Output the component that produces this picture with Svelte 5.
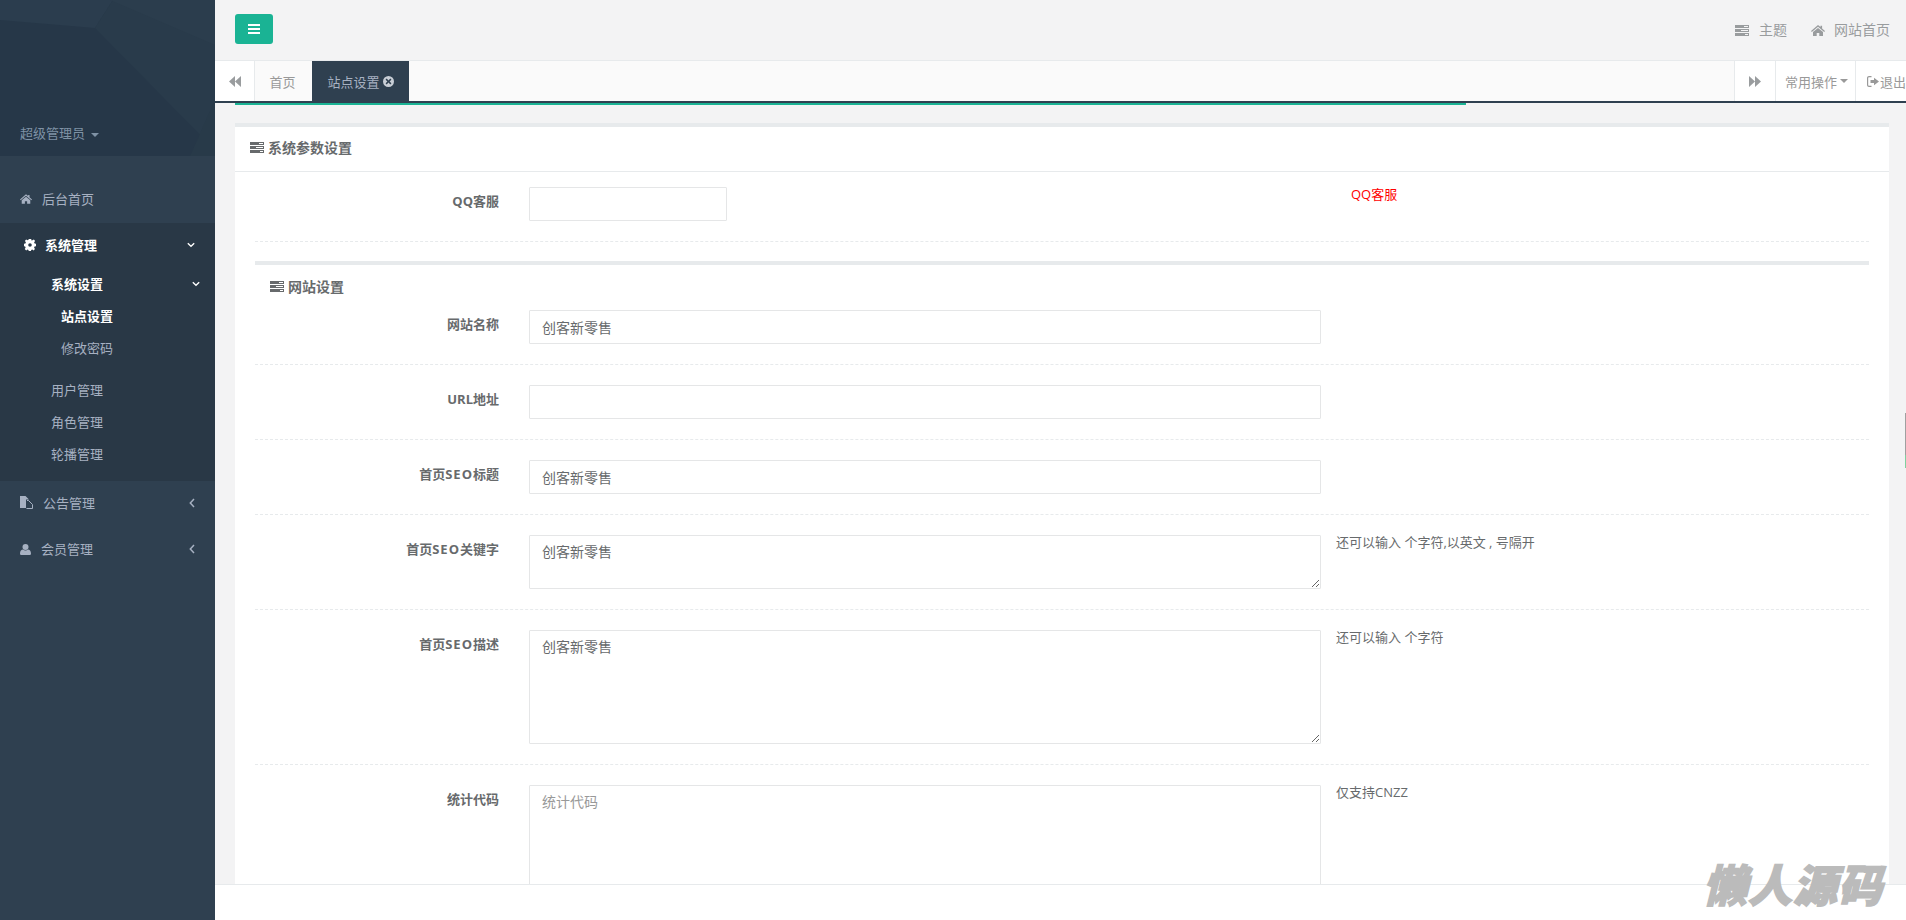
<script>
  const rows = [
    { label: '网站名称', value: '创客新零售', h: 34 },
    { label: 'URL地址', value: '', h: 34 },
    { label: '首页SEO标题', value: '创客新零售', h: 34 },
    { label: '首页SEO关键字', value: '创客新零售', h: 54, area: true, hint: '还可以输入 个字符,以英文 , 号隔开' },
    { label: '首页SEO描述', value: '创客新零售', h: 114, area: true, hint: '还可以输入 个字符' },
    { label: '统计代码', value: '', placeholder: '统计代码', h: 114, area: true, hint: '仅支持CNZZ', last: true }
  ];
</script>

{#snippet tasks(cls)}
  <svg class={cls} viewBox="0 0 14 11" aria-hidden="true"><path d="M0 0h14v3H0zM0 4h14v3H0zM0 8h14v3H0zM9 1h4v1H9zM6 5h7v1H6zM10 9h3v1h-3z" fill-rule="evenodd"/></svg>
{/snippet}
{#snippet home(cls)}
  <svg class={cls} viewBox="0 0 14 11" aria-hidden="true"><path d="M7 0 L9.500 2.100V.8h1.600v2.700L14 6l-.8.9L7 1.700.8 6.900 0 6zM2 7l5-4.100L12 7v4H8.300V8H5.700v3H2z"/></svg>
{/snippet}
{#snippet angleDown(cls)}
  <svg class={cls} viewBox="0 0 10 7" aria-hidden="true"><path d="M1 1.200 5 5l4-3.800" fill="none" stroke="currentColor" stroke-width="1.700"/></svg>
{/snippet}
{#snippet angleLeft(cls)}
  <svg class={cls} viewBox="0 0 6 10" aria-hidden="true"><path d="M5 1 1.300 5 5 9" fill="none" stroke="currentColor" stroke-width="1.500"/></svg>
{/snippet}

<div class="page">
  <aside class="side">
    <div class="profile">
      <svg class="poly" viewBox="0 0 215 156" preserveAspectRatio="none" aria-hidden="true">
        <path d="M0 0H215V156H0z" fill="#263748"/>
        <path d="M0 20 95 28 113 0H0z" fill="#2b3d4e"/>
        <path d="M95 28 215 150V0H113z" fill="#293b4b"/>
        <path d="M110 0 215 45V0z" fill="#2b3d4d"/>
        <path d="M190 156 215 100V156z" fill="#283a49"/>
      </svg>
      <div class="who">超级管理员 <i class="caret"></i></div>
    </div>
    <nav class="menu">
      <a class="top first" href="#a">{@render home('ic-home')}<span>后台首页</span></a>
      <div class="open">
        <a class="top cur" href="#a">
          <svg class="ic-cog" viewBox="0 0 12 12" aria-hidden="true"><path fill-rule="evenodd" d="M4.800 0h2.400l.3 1.600 1-.4 1.400-.6 1.200 1.500-1 1.200.5 1.100 1.400.4v2.400l-1.500.4-.4 1.100.9 1.300-1.500 1.400-1.200-.9-1.100.5-.3 1.500H4.800l-.3-1.500-1.100-.5-1.200.9-1.500-1.400.9-1.300-.4-1.100L0 7.200V4.800l1.400-.4.5-1.100-1-1.200L2.100.6l1.400.6 1-.4zM6 4.200a1.800 1.800 0 1 0 0 3.600 1.800 1.800 0 0 0 0-3.600z"/></svg>
          <span>系统管理</span>{@render angleDown('ad')}
        </a>
        <a class="sub cur s1" href="#a"><span>系统设置</span>{@render angleDown('ad2')}</a>
        <a class="third cur" href="#a">站点设置</a>
        <a class="third" href="#a">修改密码</a>
        <a class="sub gap" href="#a">用户管理</a>
        <a class="sub" href="#a">角色管理</a>
        <a class="sub" href="#a">轮播管理</a>
      </div>
      <a class="top t3" href="#a">
        <svg class="ic-files" viewBox="0 0 13 13" aria-hidden="true"><path d="M0 0h5.500L9 3.500H6V12H0z"/><path d="M7 4.500h1.500l4 4v4H6.500" fill="none" stroke="currentColor"/></svg>
        <span>公告管理</span>{@render angleLeft('al')}
      </a>
      <a class="top t4" href="#a">
        <svg class="ic-user" viewBox="0 0 11 11" aria-hidden="true"><circle cx="5.500" cy="3" r="3"/><path d="M0 9.500C0 7 1.500 5.500 3 5.500c.8.700 1.600 1 2.500 1s1.700-.3 2.500-1c1.500 0 3 1.500 3 4 0 1-.7 1.500-1.500 1.500h-8C.7 11 0 10.500 0 9.500z"/></svg>
        <span>会员管理</span>{@render angleLeft('al')}
      </a>
    </nav>
  </aside>

  <div class="main">
    <header class="top-bar">
      <button class="burger" aria-label="menu"><i></i><i></i><i></i></button>
      <div class="links">
        <a href="#a">{@render tasks('ic-task')}<span>主题</span></a>
        <a href="#a">{@render home('ic-home2')}<span>网站首页</span></a>
      </div>
    </header>

    <div class="tabs">
      <button class="tb first-b" aria-label="back"><svg viewBox="0 0 11 10" aria-hidden="true"><path d="M5.500 0v10L0 5zM11 0v10L5.500 5z"/></svg></button>
      <a class="tab" href="#a">首页</a>
      <a class="tab on" href="#a">站点设置 <svg class="x" viewBox="0 0 12 12" aria-hidden="true"><path fill-rule="evenodd" d="M6 0a6 6 0 1 1 0 12A6 6 0 0 1 6 0zM4 2.800 2.800 4l2 2-2 2L4 9.200l2-2 2 2L9.200 8l-2-2 2-2L8 2.800l-2 2z"/></svg></a>
      <div class="fill"></div>
      <button class="tb" aria-label="forward"><svg viewBox="0 0 11 10" aria-hidden="true"><path d="M0 0v10l5.500-5zM5.500 0v10L11 5z"/></svg></button>
      <a class="act" href="#a">常用操作<i class="caret dark"></i></a>
      <a class="out" href="#a"><svg viewBox="0 0 12 11" aria-hidden="true"><path d="M4.500 0v1.200H2.200C1.600 1.200 1.200 1.600 1.200 2.200v6.600c0 .6.400 1 1 1h2.300V11H2C.9 11 0 10.100 0 9V2C0 .9.900 0 2 0zM7 1.800 12 5.500 7 9.200V7H3.500V4H7z"/></svg>退出</a>
    </div>

    <div class="content">
      <div class="pace"></div>
      <section class="panel">
        <h5 class="title">{@render tasks('ic-title')}系统参数设置</h5>
        <div class="body">
          <div class="row qq">
            <span class="lbl">QQ客服</span>
            <input class="short" type="text" aria-label="QQ客服" />
            <span class="red">QQ客服</span>
          </div>
          <div class="dash"></div>
          <div class="thick"></div>
          <h5 class="sub-title">{@render tasks('ic-title')}网站设置</h5>
          {#each rows as r}
            <div class="row">
              <span class="lbl">{#each r.label.split(/(SEO)/) as part}{#if part === 'SEO'}<span class="seo">{part}</span>{:else}{part}{/if}{/each}</span>
              {#if r.area}
                <textarea class="wide" style="height:{r.h}px" value={r.value} placeholder={r.placeholder} aria-label={r.label}></textarea>
              {:else}
                <input class="wide" type="text" value={r.value} aria-label={r.label} />
              {/if}
              {#if r.hint}<span class="hint">{r.hint}</span>{/if}
            </div>
            {#if !r.last}<div class="dash"></div>{/if}
          {/each}
        </div>
      </section>
    </div>

    <footer class="foot"></footer>
  </div>

  <div class="mark">懒人源码</div>
  <div class="toggle"></div>
</div>

<style>
  :global(body) { margin: 0; background: #f3f3f4; }
  * { box-sizing: border-box; }
  a { text-decoration: none; }
  svg { display: block; fill: currentColor; flex: none; }

  .page {
    position: relative;
    display: flex;
    width: 1906px;
    height: 920px;
    overflow: hidden;
    font-family: "Open Sans", "Noto Sans CJK SC", sans-serif;
    font-size: 13px;
    color: #676a6c;
  }

  .side { width: 215px; flex: none; background: #2f4050; }
  .profile { position: relative; height: 156px; padding: 122px 0 0 20px; }
  .poly { position: absolute; inset: 0; width: 100%; height: 100%; }
  .who { position: relative; color: #7f92a5; line-height: 22px; }
  .caret {
    display: inline-block; width: 0; height: 0; margin-left: 3px; vertical-align: middle;
    border-top: 4px solid currentColor; border-left: 4px solid transparent; border-right: 4px solid transparent;
  }
  .caret.dark { margin-left: 3px; }

  .menu { display: flex; flex-direction: column; color: #a7b1c2; }
  .menu a { color: #a7b1c2; display: flex; align-items: center; line-height: 18px; }
  .first { height: 67px; padding: 19px 0 0 20px; }
  .ic-home { width: 12px; height: 10px; margin-right: 10px; }
  .open { background: #293846; height: 258px; }
  .menu a.cur { color: #fff; font-weight: 600; }
  .menu .open .top { height: 43px; padding: 0 0 0 24px; margin-bottom: 2px; }
  .ic-cog { width: 12px; height: 12px; margin-right: 9px; }
  .ad { width: 8px; height: 6px; margin-left: auto; margin-right: 20px; }
  .ad2 { width: 8px; height: 6px; margin-left: auto; margin-right: 15px; }
  .menu a.sub { height: 32px; padding-left: 51px; }
  .menu a.third { height: 32px; padding-left: 61px; }
  .menu a.gap { margin-top: 10px; }
  .menu .t3 { height: 46px; padding: 0 0 3px 20px; }
  .menu .t4 { height: 46px; padding: 0 0 2px 20px; }
  .ic-files { width: 13px; height: 13px; margin-right: 10px; }
  .ic-user { width: 11px; height: 11px; margin-right: 10px; }
  .al { width: 6px; height: 10px; margin-left: auto; margin-right: 20px; }

  .main { flex: 1; min-width: 0; display: flex; flex-direction: column; }
  .top-bar { height: 60px; flex: none; display: flex; align-items: flex-start; justify-content: space-between; padding: 14px 16px 0 20px; }
  .burger {
    width: 38px; height: 30px; padding: 0; border: 0; border-radius: 3px; background: #1ab394;
    display: flex; flex-direction: column; align-items: center; justify-content: center; gap: 2px;
  }
  .burger i { display: block; width: 12px; height: 2px; background: #fff; }
  .links { display: flex; gap: 24px; margin-top: 6px; }
  .links a { display: flex; align-items: center; color: #999c9e; font-size: 14px; line-height: 20px; }
  .ic-task { width: 14px; height: 11px; margin-right: 10px; }
  .ic-home2 { width: 14px; height: 11px; margin-right: 9px; }

  .tabs {
    height: 43px; flex: none; display: flex; background: #fafafa;
    border-top: 1px solid #e7eaec; border-bottom: 2px solid #2f4050; color: #999;
  }
  .tb {
    width: 40px; border: 0; padding: 0; background: #fff; color: #999c9e;
    border-right: 1px solid #e7eaec; display: flex; align-items: center; justify-content: center;
  }
  .tb svg { width: 12px; height: 11px; }
  .tabs .tb:not(.first-b) { border-left: 1px solid #e7eaec; border-right: 0; width: 41px; }
  .tab { width: 57px; padding-right: 2px; display: flex; align-items: center; justify-content: center; color: #999; }
  .tab.on { width: 97px; padding-right: 0; gap: 3px; background: #2f4050; color: #a7b1c2; }
  .x { width: 11px; height: 11px; color: #c8ced6; }
  .fill { flex: 1; }
  .act {
    width: 80px; background: #fff; color: #999; border-left: 1px solid #e7eaec;
    display: flex; align-items: center; padding-left: 9px;
  }
  .out {
    width: 51px; background: #fff; color: #999; border-left: 1px solid #e7eaec;
    display: flex; align-items: center; padding-left: 11px; gap: 1px; white-space: nowrap;
  }
  .out svg { width: 12px; height: 11px; }

  .content { flex: 1; min-height: 0; overflow: hidden; padding: 0 17px 0 20px; }
  .pace { width: 1231px; height: 2px; background: #1ab394; margin-bottom: 18px; }
  .panel { background: #fff; border-top: 4px solid #e7eaec; height: 800px; }
  .title {
    margin: 0; height: 45px; display: flex; align-items: center; gap: 4px;
    font-size: 14px; font-weight: 700; color: #676a6c; padding: 0 0 4px 15px;
    border-bottom: 1px solid #e7eaec;
  }
  .ic-title { width: 14px; height: 11px; }
  .body { padding: 15px 20px 0; }
  .row { display: flex; align-items: flex-start; position: relative; }
  .lbl { width: 244px; padding-top: 5px; text-align: right; font-weight: 700; line-height: 18px; flex: none; }
  .seo { letter-spacing: 1px; }
  input, textarea {
    margin-left: 30px; flex: none; border: 1px solid #e5e6e7; border-radius: 1px; background: #fff;
    font: 14px "Open Sans", "Noto Sans CJK SC", sans-serif; color: #676a6c; padding: 6px 12px; outline: 0;
  }
  textarea { line-height: 20px; }
  textarea::placeholder { color: #999; opacity: 1; }
  .short { width: 198px; height: 34px; }
  input.wide, textarea.wide { width: 792px; }
  input.wide { height: 34px; }
  .red { margin-left: 624px; color: #f00; line-height: 14px; font-weight: 400; }
  .hint { margin-left: 15px; line-height: 14px; }
  .dash { height: 1px; margin: 20px 0; border-top: 1px dashed #e7eaec; }
  .thick { height: 4px; background: #e7eaec; margin-top: -1px; }
  .sub-title {
    margin: 0; height: 45px; display: flex; align-items: center; gap: 4px;
    padding: 0 0 3px 15px; font-size: 14px; font-weight: 700; color: #676a6c;
  }

  .foot { height: 36px; flex: none; background: #fff; border-top: 1px solid #e7eaec; }

  .mark {
    position: absolute; right: 23px; top: 853px;
    font-family: "Noto Sans CJK SC", sans-serif; font-size: 44px; font-weight: 900; font-style: italic;
    color: #bbb; line-height: 60px; letter-spacing: 1px; -webkit-text-stroke: 1.5px #bbb;
  }
  .toggle { position: absolute; right: 0; top: 413px; width: 1px; height: 55px; background: linear-gradient(#a0a0a0 76%, #7fd19f 76%); }
</style>
